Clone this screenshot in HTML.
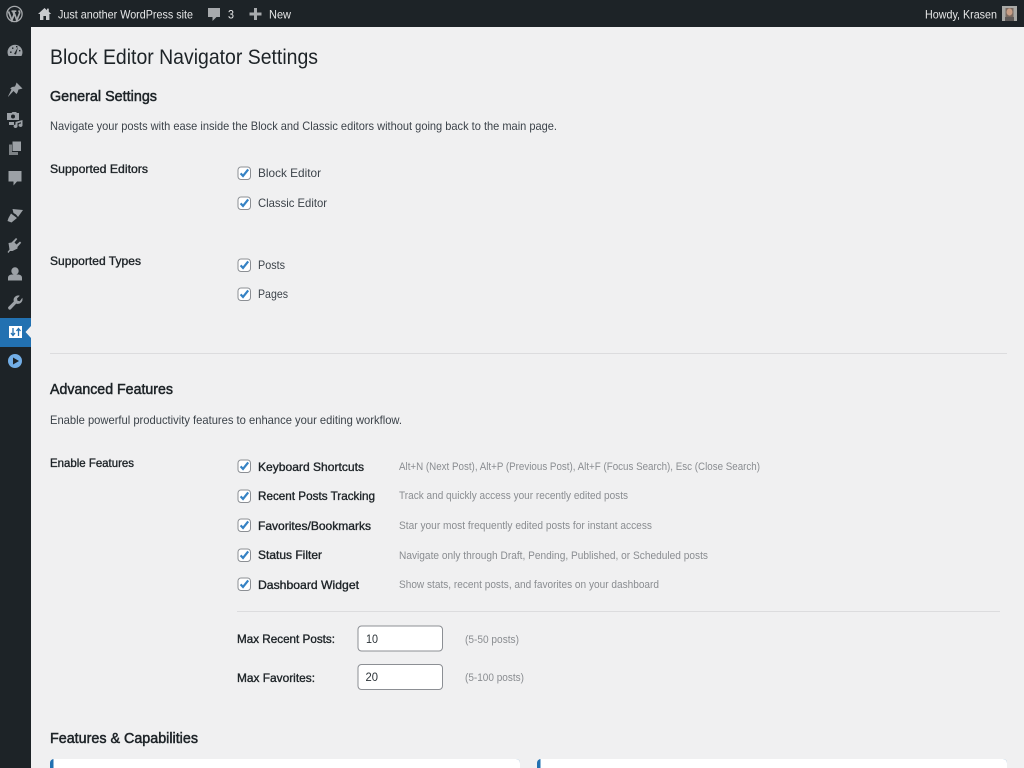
<!DOCTYPE html>
<html lang="en"><head><meta charset="utf-8"><title>Block Editor Navigator Settings</title>
<style>
html,body{margin:0;padding:0;background:#f0f0f1;width:1024px;height:768px;overflow:hidden}
svg{display:block}
text{font-family:"Liberation Sans",Arial,sans-serif}
.bar{font-size:12px;fill:#e6e7e8}
.lab{font-size:12px;fill:#1d2327;font-weight:400;stroke:#1d2327;stroke-width:.35px}
.txt{font-size:12px;fill:#3c434a}
.desc{font-size:11px;fill:#8a8d91}
.h2{font-size:14.5px;fill:#1d2327;font-weight:400;stroke:#1d2327;stroke-width:.5px}
.ic{fill:#9ca1a6}
</style></head><body>
<svg xmlns="http://www.w3.org/2000/svg" width="1024" height="768" viewBox="0 0 1024 768">
<defs>
<g id="cb"><rect x="1" y="1" width="12.500" height="12.500" rx="3" fill="#fff" stroke="#8c8f94"/><path d="M3.600 7.400 L6 9.900 L11.200 3.400" fill="none" stroke="#3582c4" stroke-width="2.200"/></g>
</defs>
<rect width="1024" height="768" fill="#f0f0f1"/>
<rect width="1024" height="27" fill="#1d2327"/>
<rect y="27" width="31" height="741" fill="#1d2327"/>

<!-- admin bar icons -->
<g transform="translate(14.5,14)">
<circle r="7.6" fill="none" stroke="#a7aaad" stroke-width="1.3"/>
<path d="M-6 -2.6 L-2.6 6.2 L-.5 .6 L-1.6 -2.6 M-3 -2.8 H1.8 M-.8 -2.6 L2.3 6.2 L5 -.5 C5.6 -2 4.6 -3 4 -3.4" fill="none" stroke="#a7aaad" stroke-width="1.7"/>
</g>
<path d="M44.5 8 L38 14 H40 V20 H43.4 V16 H46 V20 H49.4 V14 H51.2 L48.8 11.8 V8.6 H47 V10.2 Z" fill="#c9cbce"/>
<path d="M208 8 H220 V17 H216.5 L212.5 21 V17 H208 Z" fill="#a7aaad"/>
<path d="M254 8 H257 V12.5 H261.5 V15.5 H257 V20 H254 V15.5 H249.5 V12.5 H254 Z" fill="#a7aaad"/>
<text class="bar" x="58" y="18.500" textLength="135" lengthAdjust="spacingAndGlyphs">Just another WordPress site</text>
<text class="bar" x="228" y="18.500" textLength="6" lengthAdjust="spacingAndGlyphs">3</text>
<text class="bar" x="269" y="18.500" textLength="22" lengthAdjust="spacingAndGlyphs">New</text>
<text class="bar" x="925" y="18.500" textLength="72" lengthAdjust="spacingAndGlyphs">Howdy, Krasen</text>
<rect x="1002" y="6" width="15" height="15" fill="#a9a9a6"/>
<rect x="1005.500" y="8" width="8" height="13" fill="#7a6a60"/>
<ellipse cx="1009.500" cy="12" rx="3" ry="3.600" fill="#c99f86"/>
<rect x="1005" y="17" width="9" height="4" fill="#5f5a58"/>

<!-- sidebar icons -->
<g class="ic">
<g transform="translate(15,51)"><path d="M-6.500 5 A7.500 7.500 0 1 1 6.500 5 Z"/><path d="M-1 3 L3 -4 L1 3.500 Z M-5 0.500 h1.600 v1.400 h-1.600 Z M-3 -3.500 h1.400 v1.400 h-1.400 Z M1 -5 h1.400 v1.400 h-1.400 Z M4 -1 h1.400 v1.400 h-1.400 Z" fill="#1d2327"/></g>
<g transform="translate(15,90)"><path d="M1.500 -7.500 L7.500 -1.500 L5.800 -1 L3.500 -.5 L2.500 2.500 L1.500 4 L-1.500 1 L-6.800 6.800 L-7 6.500 L-3.500 -.5 L-4.800 -1.500 L-3 -3 L0 -3.500 L1 -5.800 Z"/></g>
<g transform="translate(15,119)"><path d="M-8 -6 H-3.500 L-2.500 -7 H1 L2 -6 H4 V1 H-8 Z M-6 3 H-1 V6 H-6 Z M0.500 3 L7.500 1 V6 A2 1.700 0 1 1 6 4.600 V3.200 L2.500 4.200 V7 A2 1.700 0 1 1 0.500 5.600 Z"/><circle cx="-2" cy="-2.500" r="2" fill="#1d2327"/></g>
<g transform="translate(15,148)"><path d="M-6 -3.500 H-3 V4 H3 V7 H-6 Z" opacity=".75"/><path d="M-2.500 -6.500 H6 V3 H-2.500 Z"/></g>
<g transform="translate(15,177)"><path d="M-6.500 -6 H6.500 V4.500 H2 L-1.500 8.500 V4.500 H-6.500 Z"/></g>
<g transform="translate(15,215)"><path d="M-2.500 -6 L8 -5 L3 2 L1 -.5 L-1.500 -2 Z M-4 -1.500 L2 3 L-3.500 7.500 L-7.500 6 L-6.500 3 Z"/></g>
<g transform="translate(15,245)"><path d="M-7.500 7 L-5.500 4.500 L-6.500 -2 L-3.500 -2.500 L1 -7 L2.300 -6 L-.5 -2.500 L1.500 -.5 L5 -3.500 L6.200 -2.300 L2.500 2 L2.500 3.500 L-2.500 6 L-5 6 L-6.500 8 Z"/></g>
<g transform="translate(15,274)"><circle cy="-3" r="3.700"/><path d="M-7 6.500 V3.800 Q-7 1 -3.500 .5 H3.500 Q7 1 7 3.800 V6.500 Z"/></g>
<g transform="translate(15,303)"><path d="M7.300 -5.200 A4.700 4.700 0 0 1 1.200 .6 L-4.400 6.500 A1.800 1.800 0 0 1 -6.800 4.100 L-1.200 -1.500 A4.700 4.700 0 0 1 4.800 -7.300 L2 -4.500 L2.500 -2.200 L4.800 -1.800 Z"/></g>
</g>
<rect y="318" width="31" height="29" fill="#2271b1"/>
<path d="M31 326 L25.500 332 L31 338 Z" fill="#f0f0f1"/>
<rect x="9" y="326" width="13" height="12" fill="#fff"/>
<path d="M13 328 V335 M11 333 L13 335.500 L15 333 M18.500 336 V329 M16.500 331 L18.500 328.500 L20.500 331" fill="none" stroke="#2271b1" stroke-width="1.300"/>
<circle cx="15" cy="361" r="7" fill="#72aee6"/>
<path d="M13 357.500 L19 361 L13 364.500 Z" fill="#1d2327"/>

<!-- content -->
<text x="50" y="64" font-size="21.500" fill="#1d2327" textLength="268" lengthAdjust="spacingAndGlyphs">Block Editor Navigator Settings</text>
<text class="h2" x="50" y="101" textLength="107" lengthAdjust="spacingAndGlyphs">General Settings</text>
<text class="txt" x="50" y="130" textLength="507" lengthAdjust="spacingAndGlyphs">Navigate your posts with ease inside the Block and Classic editors without going back to the main page.</text>
<text class="lab" x="50" y="173" textLength="98" lengthAdjust="spacingAndGlyphs">Supported Editors</text>
<use href="#cb" x="237" y="166"/>
<text class="txt" x="258" y="177" textLength="63" lengthAdjust="spacingAndGlyphs">Block Editor</text>
<use href="#cb" x="237" y="196"/>
<text class="txt" x="258" y="207" textLength="69" lengthAdjust="spacingAndGlyphs">Classic Editor</text>
<text class="lab" x="50" y="265" textLength="91" lengthAdjust="spacingAndGlyphs">Supported Types</text>
<use href="#cb" x="237" y="258"/>
<text class="txt" x="258" y="269" textLength="27" lengthAdjust="spacingAndGlyphs">Posts</text>
<use href="#cb" x="237" y="287"/>
<text class="txt" x="258" y="298" textLength="30" lengthAdjust="spacingAndGlyphs">Pages</text>
<rect x="50" y="353" width="957" height="1" fill="#dcdcde"/>

<text class="h2" x="50" y="394" textLength="123" lengthAdjust="spacingAndGlyphs">Advanced Features</text>
<text class="txt" x="50" y="424" textLength="352" lengthAdjust="spacingAndGlyphs">Enable powerful productivity features to enhance your editing workflow.</text>
<text class="lab" x="50" y="467" textLength="84" lengthAdjust="spacingAndGlyphs">Enable Features</text>

<use href="#cb" x="237" y="459"/>
<text class="lab" x="258" y="471" textLength="106" lengthAdjust="spacingAndGlyphs">Keyboard Shortcuts</text>
<text class="desc" x="399" y="470" textLength="361" lengthAdjust="spacingAndGlyphs">Alt+N (Next Post), Alt+P (Previous Post), Alt+F (Focus Search), Esc (Close Search)</text>
<use href="#cb" x="237" y="489"/>
<text class="lab" x="258" y="500" textLength="117" lengthAdjust="spacingAndGlyphs">Recent Posts Tracking</text>
<text class="desc" x="399" y="499" textLength="229" lengthAdjust="spacingAndGlyphs">Track and quickly access your recently edited posts</text>
<use href="#cb" x="237" y="518"/>
<text class="lab" x="258" y="530" textLength="113" lengthAdjust="spacingAndGlyphs">Favorites/Bookmarks</text>
<text class="desc" x="399" y="529" textLength="253" lengthAdjust="spacingAndGlyphs">Star your most frequently edited posts for instant access</text>
<use href="#cb" x="237" y="548"/>
<text class="lab" x="258" y="559" textLength="64" lengthAdjust="spacingAndGlyphs">Status Filter</text>
<text class="desc" x="399" y="559" textLength="309" lengthAdjust="spacingAndGlyphs">Navigate only through Draft, Pending, Published, or Scheduled posts</text>
<use href="#cb" x="237" y="577"/>
<text class="lab" x="258" y="589" textLength="101" lengthAdjust="spacingAndGlyphs">Dashboard Widget</text>
<text class="desc" x="399" y="588" textLength="260" lengthAdjust="spacingAndGlyphs">Show stats, recent posts, and favorites on your dashboard</text>

<rect x="237" y="611" width="763" height="1" fill="#dcdcde"/>
<text class="lab" x="237" y="643" textLength="98" lengthAdjust="spacingAndGlyphs">Max Recent Posts:</text>
<rect x="358" y="626" width="84.500" height="25" rx="3.500" fill="#fff" stroke="#8c8f94"/>
<text x="366" y="643" font-size="12" fill="#2c3338" textLength="12" lengthAdjust="spacingAndGlyphs">10</text>
<text class="desc" x="465" y="643" textLength="54" lengthAdjust="spacingAndGlyphs">(5-50 posts)</text>
<text class="lab" x="237" y="682" textLength="78" lengthAdjust="spacingAndGlyphs">Max Favorites:</text>
<rect x="358" y="664.500" width="84.500" height="25" rx="3.500" fill="#fff" stroke="#8c8f94"/>
<text x="365.500" y="681" font-size="12" fill="#2c3338" textLength="12.500" lengthAdjust="spacingAndGlyphs">20</text>
<text class="desc" x="465" y="681" textLength="59" lengthAdjust="spacingAndGlyphs">(5-100 posts)</text>

<text class="h2" x="50" y="743" textLength="148" lengthAdjust="spacingAndGlyphs">Features &amp; Capabilities</text>
<rect x="50" y="759" width="470" height="20" rx="4" fill="#2271b1"/>
<path d="M53.500 759 H516 a4 4 0 0 1 4 4 V768 H53.500 Z" fill="#fff"/>
<rect x="537" y="759" width="470" height="20" rx="4" fill="#2271b1"/>
<path d="M540.500 759 H1003 a4 4 0 0 1 4 4 V768 H540.500 Z" fill="#fff"/>
</svg>
</body></html>
